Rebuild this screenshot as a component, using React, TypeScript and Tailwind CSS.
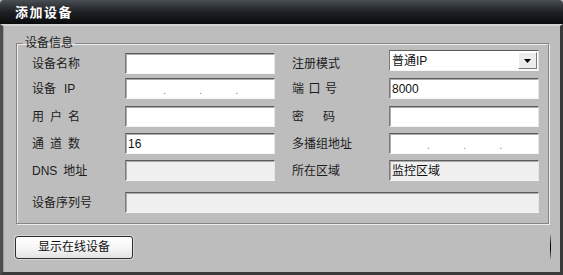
import type { ReactNode } from 'react'

const FONT = "font-['Liberation_Sans','Noto_Sans_CJK_SC',sans-serif]"

function Spread({ chars, w }: { chars: string[]; w: string }) {
  return (
    <span className={`flex justify-between ${w}`}>
      {chars.map((c, i) => (
        <span key={i}>{c}</span>
      ))}
    </span>
  )
}

function Box({ children, disabled, w = 'w-[150px]' }: { children?: ReactNode; disabled?: boolean; w?: string }) {
  return (
    <div
      className={`${w} h-[21px] flex items-center pl-[2px] border border-t-[#5c5c5c] border-l-[#7c7c7c] border-r-[#e4e4e4] border-b-[#f6f6f6] shadow-[inset_1px_1px_0_#a9a9a9] ${
        disabled ? 'bg-[#f0f0f0]' : 'bg-white'
      } text-[12px] leading-[14px] text-[#111]`}
    >
      {children}
    </div>
  )
}

function IpDots() {
  return (
    <div className="flex items-center pl-[35px] gap-[33px] text-[#8a8a8a] text-[11px] leading-none translate-y-[2px]">
      <span>.</span>
      <span>.</span>
      <span>.</span>
    </div>
  )
}

function Row({ left, leftInput, right, rightInput, mt }: { left: ReactNode; leftInput: ReactNode; right: ReactNode; rightInput: ReactNode; mt: string }) {
  return (
    <div className={`flex items-center ${mt}`}>
      <div className="w-[93px] text-[12px] leading-[14px]">{left}</div>
      {leftInput}
      <div className="w-[17px]" />
      <div className="w-[97px] text-[12px] leading-[14px]">{right}</div>
      {rightInput}
    </div>
  )
}

export default function App() {
  return (
    <div className={`w-[563px] h-[275px] flex flex-col bg-[#bdbdbd] text-[#1c1c1c] ${FONT}`}>
      {/* title bar */}
      <div className="h-[24px] shrink-0 flex items-center pl-[15px] rounded-t-[4px] bg-gradient-to-b from-[#4a4f55] via-[#1e2125] to-[#090a0b]">
        <span className="text-white font-bold text-[13px] tracking-[1.5px] leading-none">添加设备</span>
      </div>

      <div className="flex-1 flex flex-col border-l-[3px] border-l-[#4d4d4d] border-r-[3px] border-r-[#3a3a3a] border-b-[3px] border-b-[#3a3a3a] border-t-[2px] border-t-[#d2d2d2] shadow-[inset_1px_0_0_#9a9a9a] pt-[10px]">
        <fieldset className="ml-[13px] mr-[11px] px-[6px] pt-[3px] pb-[10px] border border-[#858585] shadow-[inset_1px_1px_0_#ececec,1px_1px_0_#ececec]">
          <legend className="px-[2px] text-[12px] leading-[14px]">设备信息</legend>
          <div className="pl-[9px] flex flex-col">
            <Row
              mt="mt-0"
              left="设备名称"
              leftInput={<Box />}
              right="注册模式"
              rightInput={
                <div className="w-[150px] h-[21px] -mt-[3px] mb-[3px] flex items-stretch border border-t-[#5c5c5c] border-l-[#7c7c7c] border-r-[#e4e4e4] border-b-[#f6f6f6] bg-white">
                  <div className="flex-1 flex items-center pl-[2px] text-[12px] leading-[14px] text-[#111]">普通IP</div>
                  <div className="w-[19px] m-[1px] flex items-center justify-center bg-[#ececec] border border-t-white border-l-white border-r-[#7a7a7a] border-b-[#7a7a7a]">
                    <svg width="7" height="4" viewBox="0 0 7 4">
                      <path d="M0 0h7L3.5 4z" fill="#000" />
                    </svg>
                  </div>
                </div>
              }
            />
            <Row
              mt="mt-[4px]"
              left={
                <span className="flex">
                  设备<span className="ml-[8px]">IP</span>
                </span>
              }
              leftInput={
                <Box>
                  <IpDots />
                </Box>
              }
              right={<Spread chars={['端', '口', '号']} w="w-[45px]" />}
              rightInput={<Box>8000</Box>}
            />
            <Row
              mt="mt-[7px]"
              left={<Spread chars={['用', '户', '名']} w="w-[48px]" />}
              leftInput={<Box />}
              right={<Spread chars={['密', '码']} w="w-[43px]" />}
              rightInput={<Box />}
            />
            <Row
              mt="mt-[6px]"
              left={<Spread chars={['通', '道', '数']} w="w-[48px]" />}
              leftInput={<Box>16</Box>}
              right="多播组地址"
              rightInput={
                <Box>
                  <IpDots />
                </Box>
              }
            />
            <Row
              mt="mt-[6px]"
              left={
                <span className="flex">
                  DNS<span className="ml-[6px]">地址</span>
                </span>
              }
              leftInput={<Box disabled />}
              right="所在区域"
              rightInput={<Box disabled>监控区域</Box>}
            />
            <div className="flex items-center mt-[11px]">
              <div className="w-[93px] text-[12px] leading-[14px]">设备序列号</div>
              <Box disabled w="w-[414px]" />
            </div>
          </div>
        </fieldset>

        <div className="flex items-center justify-between mt-[11px] pl-[12px] pr-[9px]">
          <button className="w-[118px] h-[23px] rounded-[3px] border border-[#2e2e2e] bg-gradient-to-b from-white via-[#f6f6f6] to-[#e2e2e2] text-[12px] leading-[14px] text-[#111] shadow-[0_0_0_1px_#d6d6d6]">
            显示在线设备
          </button>
          <div className="w-[1px] h-[24px] bg-gradient-to-b from-[#9a9a9a] via-[#000] to-[#9a9a9a]" />
        </div>
      </div>
    </div>
  )
}
